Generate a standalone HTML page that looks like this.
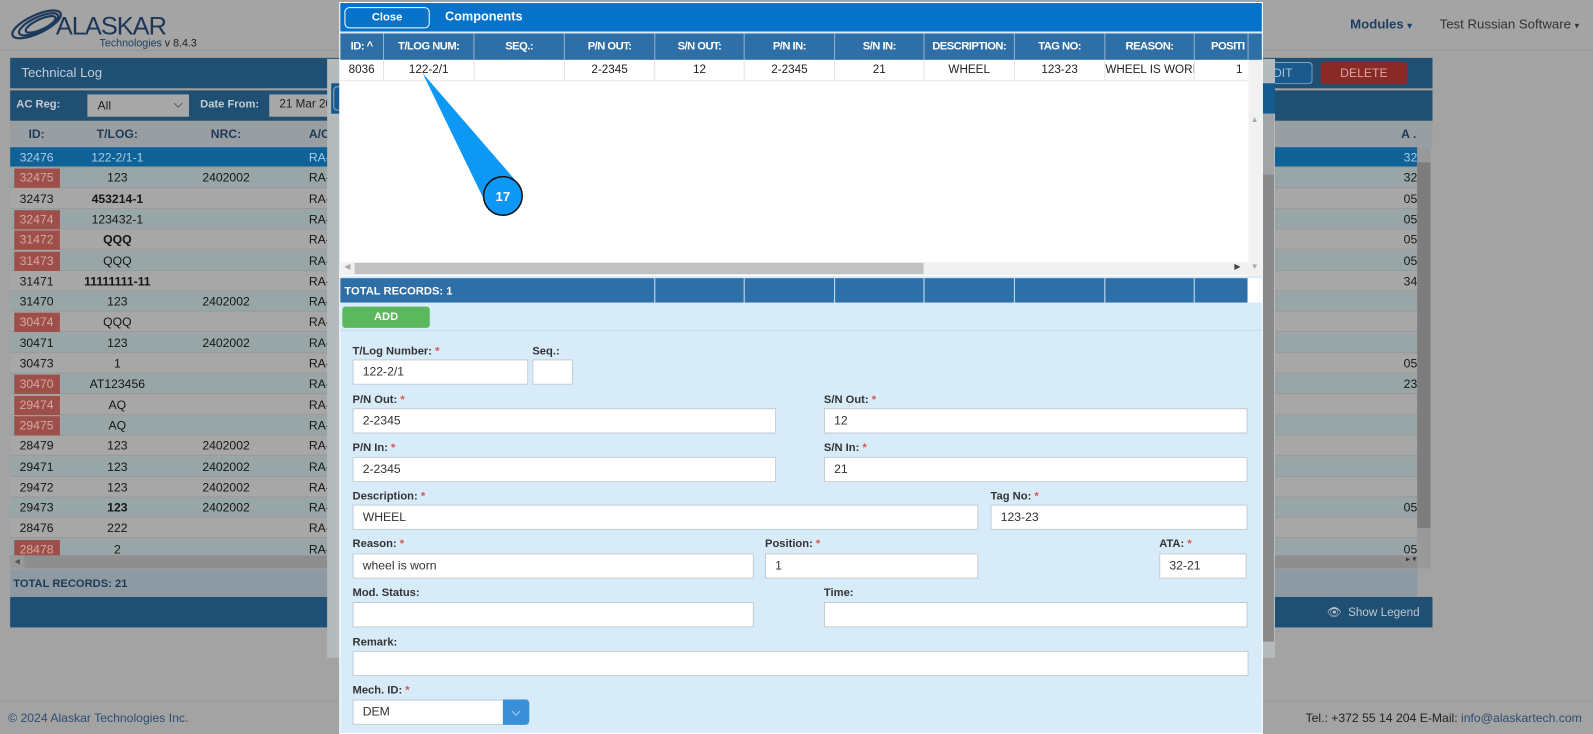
<!DOCTYPE html>
<html><head><meta charset="utf-8"><style>
*{box-sizing:border-box;margin:0;padding:0}
html,body{width:1593px;height:734px;overflow:hidden;background:#a3a3a3;font-family:"Liberation Sans",Arial,sans-serif}
#w{position:absolute;left:0;top:0;width:1568px;height:723px;transform:scale(1.01594,1.01521);transform-origin:0 0;background:#a3a3a3}
.a{position:absolute}
.hdr{left:0;top:0;width:1568px;height:50px;border-bottom:1px solid #959595;background:#a4a4a4}
.cell{position:absolute;text-align:center;font-size:12px;line-height:20px;color:#151515}
.inp{position:absolute;background:#fff;border:1px solid #bfcbd4;font-size:12px;color:#333;padding-left:9px;line-height:22px}
.lbl{position:absolute;font-size:11px;font-weight:bold;color:#333}
.lbl b{color:#d9534f}
.mh{position:absolute;top:33px;height:26px;color:#fff;font-size:11px;font-weight:bold;text-align:center;line-height:26px;border-right:1px solid #8fb3d3;letter-spacing:-0.5px}
.mr{position:absolute;top:59px;height:20px;font-size:11.5px;text-align:center;line-height:20px;color:#222;border-right:1px solid #e3e3e3}
.tb{position:absolute;top:274px;height:24px;border-right:1px solid #cfe3f3}
</style></head><body><div id="w">
<div class="a hdr"></div>
<!-- logo -->
<svg class="a" style="left:8px;top:6px" width="60" height="36" viewBox="0 0 60 36">
<g fill="none" stroke="#1e3a5a" stroke-width="2.2">
<ellipse cx="28" cy="18" rx="26" ry="9" transform="rotate(-25 28 18)"/>
<ellipse cx="30" cy="18" rx="21" ry="7" transform="rotate(-25 30 18)"/>
<ellipse cx="32" cy="18" rx="16" ry="5" transform="rotate(-25 32 18)"/>
</g></svg>
<div class="a" style="left:55px;top:12px;font-size:25px;color:#1e3557;letter-spacing:-1px">ALASKAR</div>
<div class="a" style="left:98px;top:37px;font-size:10.5px;color:#1e3f62">Technologies <span style="color:#222">v 8.4.3</span></div>
<div class="a" style="left:1329px;top:16px;font-size:13px;font-weight:bold;color:#1e3f62">Modules <span style="font-size:9px">▾</span></div>
<div class="a" style="left:1417px;top:16px;font-size:13px;color:#333">Test Russian Software <span style="font-size:9px">▾</span></div>

<!-- technical log panel -->
<div class="a" style="left:10px;top:57px;width:1400px;height:30px;background:#1f4f73"></div>
<div class="a" style="left:21px;top:64px;font-size:13px;color:#c5ccd3">Technical Log</div>
<div class="a" style="left:1245px;top:61px;width:47px;height:22px;border:1px solid #7fa4c4;border-left:none;border-radius:0 4px 4px 0;background:#1a5a8c;color:#a8c2d8;font-size:12px;line-height:20px">EDIT</div>
<div class="a" style="left:1300px;top:61px;width:85px;height:22px;border-radius:3px;background:#8a2a26;color:#d8a8a5;font-size:12px;line-height:22px;text-align:center">DELETE</div>
<div class="a" style="left:10px;top:89px;width:1400px;height:30px;background:#1f4f73"></div>
<div class="a" style="left:16px;top:97px;font-size:11px;font-weight:bold;color:#c5ccd3">AC Reg:</div>
<div class="a" style="left:86px;top:93px;width:100px;height:22px;background:#a7a7a7;font-size:12px;color:#222;padding:4px 10px">All<span style="position:absolute;right:6px;top:2px">⌵</span></div>
<div class="a" style="left:197px;top:97px;font-size:11px;font-weight:bold;color:#c5ccd3">Date From:</div>
<div class="a" style="left:265px;top:93px;width:60px;height:22px;background:#a7a7a7;font-size:11.5px;color:#222;padding:4px 10px;overflow:hidden;white-space:nowrap">21 Mar 20</div>
<div class="a" style="left:10px;top:119px;width:1400px;height:26px;background:#999ea2"></div>
<div class="cell" style="left:10px;top:122px;width:52px;font-weight:bold;color:#1e3a55">ID:</div>
<div class="cell" style="left:62px;top:122px;width:107px;font-weight:bold;color:#1e3a55">T/LOG:</div>
<div class="cell" style="left:169px;top:122px;width:107px;font-weight:bold;color:#1e3a55">NRC:</div>
<div class="cell" style="left:276px;top:122px;width:60px;font-weight:bold;color:#1e3a55;text-align:left;padding-left:28px">A/C</div>
<div class="cell" style="left:1346px;top:122px;width:50px;font-weight:bold;color:#1e3a55;text-align:right;padding-right:2px">A .</div>
<div id="rows"></div>
<div class="a" style="left:10px;top:547px;width:1385px;height:13px;background:#8e8e8e"></div>
<div class="a" style="left:10px;top:547px;width:14px;height:13px;background:#999;font-size:7px;color:#555;line-height:13px;text-align:center">◀</div>
<div class="a" style="left:1395px;top:145px;width:13px;height:415px;background:#999"></div>
<div class="a" style="left:1395px;top:160px;width:13px;height:360px;background:#7d7d7d"></div>
<div class="a" style="left:1384px;top:546px;font-size:8px;color:#333">▸ ▾</div>
<div class="a" style="left:10px;top:561px;width:1385px;height:27px;background:#8e9aa3"></div>
<div class="a" style="left:13px;top:569px;font-size:11px;font-weight:bold;color:#1e3a55">TOTAL RECORDS: 21</div>
<div class="a" style="left:10px;top:588px;width:1400px;height:30px;background:#1f4f73"></div>
<div class="a" style="left:1306px;top:596px;font-size:11.5px;color:#c0c8cf">👁&nbsp; Show Legend</div>
<div class="a" style="left:0;top:690px;width:1568px;height:1px;background:#959595"></div>
<div class="a" style="left:8px;top:700px;font-size:12px;color:#2e4d6e">© 2024 Alaskar Technologies Inc.</div>
<div class="a" style="left:1285px;top:700px;font-size:12px;color:#222">Tel.: +372 55 14 204 E-Mail: <span style="color:#2e4d6e">info@alaskartech.com</span></div>

<!-- behind modal -->
<div class="a" style="left:322px;top:58px;width:933px;height:590px;background:#b5babd"></div>
<div class="a" style="left:326px;top:82px;width:929px;height:30px;background:#155a8f"></div>
<div class="a" style="left:328px;top:85px;width:20px;height:24px;border:1px solid #9ab;border-radius:4px"></div>
<div class="a" style="left:1243px;top:112px;width:11px;height:520px;background:#a0a4a6"></div>
<div class="a" style="left:1243px;top:172px;width:11px;height:460px;background:#8a8a8a"></div>

<!-- components modal -->
<div class="a" style="left:334px;top:2px;width:909px;height:721px;background:#d7ebf9;border:1px solid #fff"></div>
<div class="a" style="left:335px;top:3px;width:907px;height:28px;background:#0672c9"></div>
<div class="a" style="left:339px;top:7px;width:84px;height:21px;border:1px solid #fff;border-radius:5px;color:#fff;font-size:11px;font-weight:bold;text-align:center;line-height:19px">Close</div>
<div class="a" style="left:438px;top:9px;color:#fff;font-size:12.5px;font-weight:bold">Components</div>
<div class="a" style="left:335px;top:33px;width:907px;height:26px;background:#2f6fa7"></div>
<div class="mh" style="left:335px;width:43px">ID: ^</div>
<div class="mh" style="left:378px;width:89px">T/LOG NUM:</div>
<div class="mh" style="left:467px;width:89px">SEQ.:</div>
<div class="mh" style="left:556px;width:89px">P/N OUT:</div>
<div class="mh" style="left:645px;width:88px">S/N OUT:</div>
<div class="mh" style="left:733px;width:89px">P/N IN:</div>
<div class="mh" style="left:822px;width:88px">S/N IN:</div>
<div class="mh" style="left:910px;width:89px">DESCRIPTION:</div>
<div class="mh" style="left:999px;width:89px">TAG NO:</div>
<div class="mh" style="left:1088px;width:88px">REASON:</div>
<div class="mh" style="left:1176px;width:53px;text-align:left;padding-left:16px;overflow:hidden">POSITI</div>
<div class="a" style="left:335px;top:59px;width:894px;height:213px;background:#fff"></div>
<div class="a" style="left:335px;top:79px;width:894px;height:1px;background:#e6e6e6"></div>
<div class="mr" style="left:335px;width:43px">8036</div>
<div class="mr" style="left:378px;width:89px">122-2/1</div>
<div class="mr" style="left:467px;width:89px"></div>
<div class="mr" style="left:556px;width:89px">2-2345</div>
<div class="mr" style="left:645px;width:88px">12</div>
<div class="mr" style="left:733px;width:89px">2-2345</div>
<div class="mr" style="left:822px;width:88px">21</div>
<div class="mr" style="left:910px;width:89px">WHEEL</div>
<div class="mr" style="left:999px;width:89px">123-23</div>
<div class="mr" style="left:1088px;width:88px;overflow:hidden;white-space:nowrap">WHEEL IS WORN</div>
<div class="mr" style="left:1176px;width:53px;text-align:right;padding-right:6px;border:none">1</div>
<div class="a" style="left:1229px;top:59px;width:13px;height:213px;background:#f1f1f1"></div>
<div class="a" style="left:1231px;top:113px;font-size:8px;color:#aaa">▲</div>
<div class="a" style="left:1231px;top:258px;font-size:8px;color:#aaa">▼</div>
<div class="a" style="left:335px;top:258px;width:894px;height:13px;background:#f1f1f1"></div>
<div class="a" style="left:349px;top:259px;width:560px;height:11px;background:#c1c1c1"></div>
<div class="a" style="left:339px;top:258px;font-size:8px;color:#aaa">◀</div>
<div class="a" style="left:1215px;top:258px;font-size:8px;color:#444">▶</div>
<div class="a" style="left:335px;top:274px;width:893px;height:24px;background:#2f6fa7"></div>
<div class="tb" style="left:335px;width:310px"></div>
<div class="tb" style="left:645px;width:88px"></div>
<div class="tb" style="left:733px;width:89px"></div>
<div class="tb" style="left:822px;width:88px"></div>
<div class="tb" style="left:910px;width:89px"></div>
<div class="tb" style="left:999px;width:89px"></div>
<div class="tb" style="left:1088px;width:88px"></div>
<div class="a" style="left:1228px;top:274px;width:14px;height:24px;background:#fff"></div>
<div class="a" style="left:339px;top:281px;font-size:11px;font-weight:bold;color:#fff">TOTAL RECORDS: 1</div>
<div class="a" style="left:337px;top:302px;width:86px;height:21px;background:#5cb85c;border-radius:3px;color:#fff;font-size:11px;font-weight:bold;text-align:center;line-height:21px">ADD</div>
<div class="a" style="left:335px;top:325px;width:907px;height:1px;background:#c8dced"></div>

<div class="lbl" style="left:347px;top:340px">T/Log Number: <b>*</b></div>
<div class="inp" style="left:347px;top:354px;width:173px;height:25px">122-2/1</div>
<div class="lbl" style="left:524px;top:340px">Seq.:</div>
<div class="inp" style="left:524px;top:354px;width:40px;height:25px"></div>
<div class="lbl" style="left:347px;top:388px">P/N Out: <b>*</b></div>
<div class="inp" style="left:347px;top:402px;width:417px;height:25px">2-2345</div>
<div class="lbl" style="left:811px;top:388px">S/N Out: <b>*</b></div>
<div class="inp" style="left:811px;top:402px;width:417px;height:25px">12</div>
<div class="lbl" style="left:347px;top:435px">P/N In: <b>*</b></div>
<div class="inp" style="left:347px;top:450px;width:417px;height:25px">2-2345</div>
<div class="lbl" style="left:811px;top:435px">S/N In: <b>*</b></div>
<div class="inp" style="left:811px;top:450px;width:417px;height:25px">21</div>
<div class="lbl" style="left:347px;top:483px">Description: <b>*</b></div>
<div class="inp" style="left:347px;top:497px;width:616px;height:25px">WHEEL</div>
<div class="lbl" style="left:975px;top:483px">Tag No: <b>*</b></div>
<div class="inp" style="left:975px;top:497px;width:253px;height:25px">123-23</div>
<div class="lbl" style="left:347px;top:530px">Reason: <b>*</b></div>
<div class="inp" style="left:347px;top:545px;width:395px;height:25px">wheel is worn</div>
<div class="lbl" style="left:753px;top:530px">Position: <b>*</b></div>
<div class="inp" style="left:753px;top:545px;width:210px;height:25px">1</div>
<div class="lbl" style="left:1141px;top:530px">ATA: <b>*</b></div>
<div class="inp" style="left:1141px;top:545px;width:86px;height:25px">32-21</div>
<div class="lbl" style="left:347px;top:578px">Mod. Status:</div>
<div class="inp" style="left:347px;top:593px;width:395px;height:25px"></div>
<div class="lbl" style="left:811px;top:578px">Time:</div>
<div class="inp" style="left:811px;top:593px;width:417px;height:25px"></div>
<div class="lbl" style="left:347px;top:627px">Remark:</div>
<div class="inp" style="left:347px;top:641px;width:882px;height:25px"></div>
<div class="lbl" style="left:347px;top:674px">Mech. ID: <b>*</b></div>
<div class="inp" style="left:347px;top:689px;width:173px;height:25px">DEM</div>
<div class="a" style="left:495px;top:689px;width:26px;height:25px;background:#3a8fd9;border-radius:0 4px 4px 0;color:#fff;font-size:12px;text-align:center;line-height:24px">⌵</div>

<!-- callout -->
<svg class="a" style="left:0;top:0" width="1568" height="723">
<path d="M416 72 L512 183 L478 200 Z" fill="#0e98f5"/>
<circle cx="495" cy="193" r="19" fill="#0e98f5" stroke="#111" stroke-width="1.5"/>
<text x="495" y="198" text-anchor="middle" font-family="Liberation Sans" font-weight="bold" font-size="13" fill="#fff">17</text>
</svg>
</div>
<script>
var d=[["32476","122-2/1-1","","32",2],["32475","123","2402002","32",1],["32473","453214-1","","05",0,1],["32474","123432-1","","05",1],["31472","QQQ","","05",1,1],["31473","QQQ","","05",1],["31471","11111111-11","","34",0,1],["31470","123","2402002","",0],["30474","QQQ","","",1],["30471","123","2402002","",0],["30473","1","","05",0],["30470","AT123456","","23",1],["29474","AQ","","",1],["29475","AQ","","",1],["28479","123","2402002","",0],["29471","123","2402002","",0],["29472","123","2402002","",0],["29473","123","2402002","05",0,1],["28476","222","","",0],["28478","2","","05",1]];
var h="";for(var i=0;i<d.length;i++){var r=d[i],y=145+i*20.3,sel=r[4]==2;var bg=sel?"#0f6196":(i%2?"#99a6a8":"#a7a7a7");var tc=sel?"#a6cfe9":"#151515";
h+='<div class="a" style="left:10px;top:'+y+'px;width:1385px;height:20px;background:'+bg+';border-bottom:1px solid #999"></div>';
if(r[4]==1)h+='<div class="a" style="left:14px;top:'+(y+1)+'px;width:45px;height:19px;background:#9e4f4a"></div>';
h+='<div class="cell" style="left:10px;top:'+y+'px;width:52px;color:'+(r[4]==1?"#d6a9a4":tc)+'">'+r[0]+'</div>';
h+='<div class="cell" style="left:62px;top:'+y+'px;width:107px;color:'+tc+';'+(r[5]?"font-weight:bold":"")+'">'+r[1]+'</div>';
h+='<div class="cell" style="left:169px;top:'+y+'px;width:107px;color:'+tc+'">'+r[2]+'</div>';
h+='<div class="cell" style="left:276px;top:'+y+'px;width:60px;text-align:left;padding-left:28px;color:'+tc+'">RA-</div>';
h+='<div class="cell" style="left:1346px;top:'+y+'px;width:49px;text-align:right;color:'+tc+'">'+r[3]+'</div>';}
document.getElementById("rows").outerHTML=h;
</script>
</body></html>
